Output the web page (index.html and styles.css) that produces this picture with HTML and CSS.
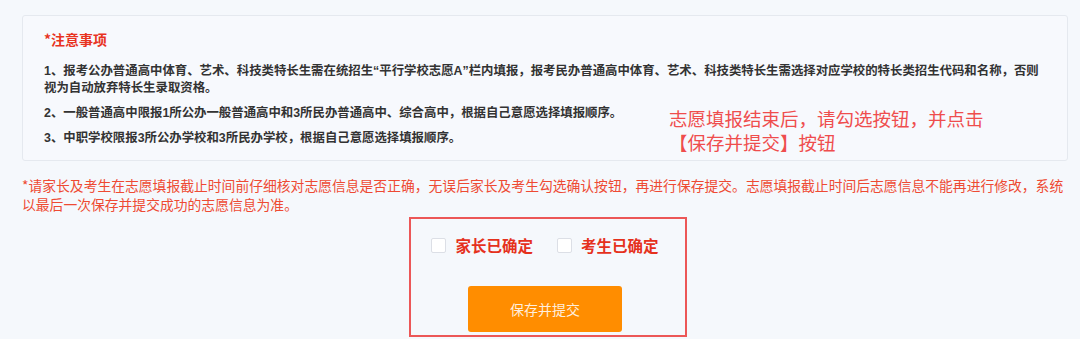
FILE: index.html
```html
<!DOCTYPE html>
<html lang="zh-CN">
<head>
    <meta charset="UTF-8">
    <meta name="viewport" content="width=device-width, initial-scale=1.0">
    <title>志愿确认</title>
    <link rel="stylesheet" href="styles.css">
</head>
<body>
    <div class="page">
        <div class="notice">
            <h3 class="notice-title">*注意事项</h3>
            <p>1、报考公办普通高中体育、艺术、科技类特长生需在统招生“平行学校志愿A”栏内填报，报考民办普通高中体育、艺术、科技类特长生需选择对应学校的特长类招生代码和名称，否则视为自动放弃特长生录取资格。</p>
            <p>2、一般普通高中限报1所公办一般普通高中和3所民办普通高中、综合高中，根据自己意愿选择填报顺序。</p>
            <p>3、中职学校限报3所公办学校和3所民办学校，根据自己意愿选择填报顺序。</p>
        </div>

        <p class="warning">*请家长及考生在志愿填报截止时间前仔细核对志愿信息是否正确，无误后家长及考生勾选确认按钮，再进行保存提交。志愿填报截止时间后志愿信息不能再进行修改，系统以最后一次保存并提交成功的志愿信息为准。</p>

        <div class="confirm-box">
            <div class="confirm-row">
                <label class="check"><span class="check-box"></span>家长已确定</label>
                <label class="check"><span class="check-box"></span>考生已确定</label>
            </div>
            <button class="submit-btn">保存并提交</button>
        </div>

        <!-- annotation laid over the notice -->
        <div class="tip">志愿填报结束后，请勾选按钮，并点击<br>【保存并提交】按钮</div>
    </div>
</body>
</html>
```

FILE: styles.css
```css
body {
    margin: 0;
    background-color: #f5f8fc;
    font-family: "Microsoft YaHei", "Noto Sans CJK SC", sans-serif;
}

.page {
    position: relative;
    width: 1080px;
    height: 339px;
    overflow: hidden;
}

/* Notice box */
.notice {
    margin: 15px 0 0 22px;
    width: 1046px;
    box-sizing: border-box;
    padding: 13px 27px 13px 21px;
    background-color: #f7f9fd;
    border: 1px solid #e5e9ef;
    border-radius: 3px;
}

.notice-title {
    margin: 0 0 14px;
    font-size: 14px;
    line-height: 20px;
    font-weight: bold;
    color: #e8331f;
}

.notice p {
    margin: 8px 0 0;
    font-family: "Liberation Sans", "Noto Sans CJK SC", sans-serif;
    font-size: 12.4px;
    line-height: 17px;
    font-weight: bold;
    color: #333333;
}

.notice-title + p {
    margin-top: 0;
}

.warning {
    margin: 15px 12px 0 22px;
    font-size: 13.8px;
    line-height: 19px;
    color: #ee4a33;
}

/* Confirm area */
.confirm-box {
    margin: 3px 0 0 409px;
    width: 278px;
    height: 120px;
    box-sizing: border-box;
    border: 2px solid #ec5757;
    padding: 15px 6px 0 0;
    display: flex;
    flex-direction: column;
    align-items: center;
}

.confirm-row {
    display: flex;
    gap: 24px;
    height: 22px;
    align-items: center;
}

.check {
    display: flex;
    align-items: center;
    gap: 9px;
    font-size: 15.5px;
    font-weight: bold;
    color: #e5311d;
}

.check-box {
    width: 15px;
    height: 15px;
    box-sizing: border-box;
    background-color: #ffffff;
    border: 1px solid #dcdfe6;
    border-radius: 2px;
}

.submit-btn {
    margin-top: 30px;
    width: 154px;
    height: 46px;
    border: none;
    border-radius: 3px;
    background-color: #ff8d00;
    color: #ffeedd;
    font-family: inherit;
    font-size: 14px;
    cursor: pointer;
}

.tip {
    position: absolute;
    left: 669px;
    top: 106px;
    font-size: 18.5px;
    line-height: 24px;
    color: #ef4d4d;
}
```
